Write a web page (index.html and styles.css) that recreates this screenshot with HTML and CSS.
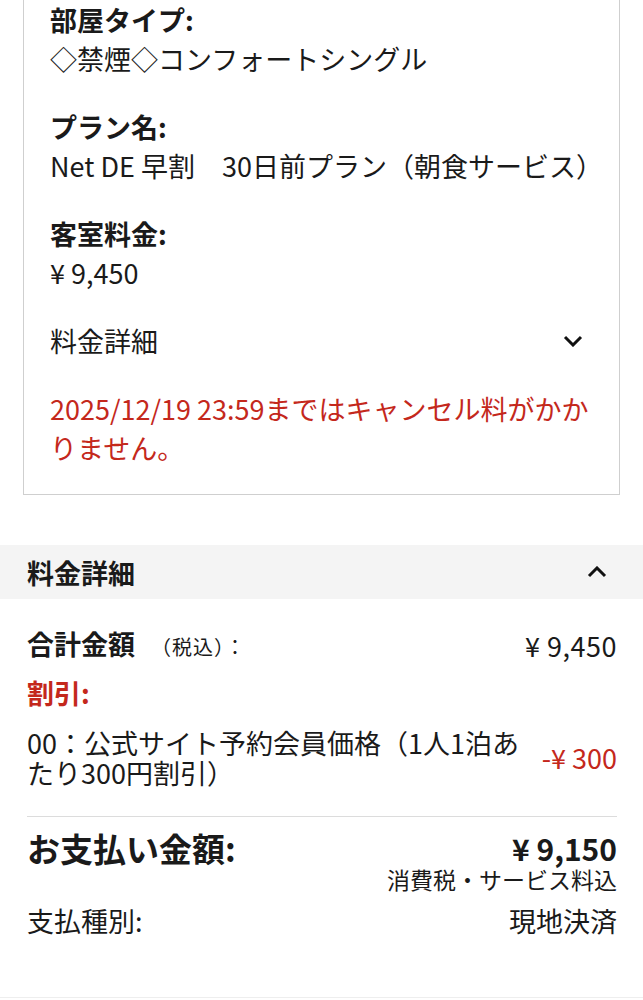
FILE: index.html
```html
<!DOCTYPE html>
<html lang="ja">
  <head>
    <meta charset="UTF-8">
    <title>ご予約内容</title>
    <link rel="stylesheet" href="styles.css">
  </head>
  <body>
    <div class="card">
      <div class="field">
        <div class="field-label">部屋タイプ:</div>
        <div>◇禁煙◇コンフォートシングル</div>
      </div>
      <div class="field">
        <div class="field-label">プラン名:</div>
        <div>Net DE 早割　30日前プラン（朝食サービス）</div>
      </div>
      <div class="field">
        <div class="field-label">客室料金:</div>
        <div>¥ 9,450</div>
      </div>
      <div class="toggle">
        <span>料金詳細</span>
        <svg class="chevron" width="20" height="12" viewBox="0 0 20 12"><polyline points="2,2 10,10 18,2" /></svg>
      </div>
      <div class="notice">2025/12/19 23:59まではキャンセル料がかかりません。</div>
    </div>

    <div class="summary">
      <div class="summary-head">
        <span>料金詳細</span>
        <svg class="chevron" width="20" height="12" viewBox="0 0 20 12"><polyline points="2,10 10,2 18,10" /></svg>
      </div>
      <div class="summary-body">
        <div class="row">
          <span><b>合計金額</b><small class="tax">（税込）：</small></span>
          <span class="total-amount">¥ 9,450</span>
        </div>
        <div class="discount-label">割引:</div>
        <div class="row discount">
          <span class="discount-name">00：公式サイト予約会員価格（1人1泊あたり300円割引）</span>
          <span class="minus">-¥ 300</span>
        </div>
        <div class="pay">
          <div class="row pay-total">
            <span>お支払い金額:</span>
            <span class="pay-amount">¥ 9,150</span>
          </div>
          <div class="pay-note">消費税・サービス料込</div>
          <div class="row pay-type">
            <span>支払種別:</span>
            <span>現地決済</span>
          </div>
        </div>
      </div>
    </div>
    <div class="bottom-line"></div>
  </body>
</html>
```
FILE: styles.css
```css
body {
  margin: 0;
  font-family: "Noto Sans CJK JP", "Noto Sans", sans-serif;
  font-size: 27px;
  line-height: 39px;
  color: #1a1a1a;
  background: #fff;
}

.card {
  margin: 0 23px;
  border: 1px solid #cfcfcf;
  border-top: none;
  padding: 0 16px 27px 26px;
}

.field {
  margin-bottom: 29px;
}

.field-label {
  font-weight: 700;
}

.toggle {
  display: flex;
  justify-content: space-between;
  align-items: center;
  margin-bottom: 29px;
}

.toggle .chevron {
  margin-right: 20px;
}

.chevron polyline {
  fill: none;
  stroke: #111;
  stroke-width: 3;
}

.notice {
  color: #c4281c;
}

.summary {
  margin-top: 50px;
}

.summary-head {
  display: flex;
  justify-content: space-between;
  align-items: center;
  height: 54px;
  padding: 0 36px 0 27px;
  background: #f4f4f4;
  font-weight: 700;
}

.summary-body {
  padding: 25px 26px 0 27px;
}

.row {
  display: flex;
  justify-content: space-between;
  align-items: center;
}

.tax {
  font-size: 20px;
  margin-left: 16px;
  letter-spacing: 1px;
}

.total-amount {
  letter-spacing: 0.5px;
}

.discount-label {
  margin-top: 7px;
  color: #c4281c;
  font-weight: 700;
}

.discount {
  margin-top: 16px;
  line-height: 30px;
  padding-bottom: 28px;
  border-bottom: 1px solid #dcdcdc;
}

.discount-name {
  flex: 1;
  padding-right: 14px;
}

.minus {
  color: #c4281c;
}

.pay {
  padding-top: 13px;
}

.pay-total {
  font-size: 33px;
  font-weight: 700;
  line-height: 36px;
}

.pay-amount {
  font-size: 30px;
}

.pay-note {
  margin-top: 2px;
  text-align: right;
  font-size: 23px;
  line-height: 22px;
}

.pay-type {
  margin-top: 11px;
}

.bottom-line {
  margin-top: 57px;
  border-top: 1px solid #eee;
}
```
